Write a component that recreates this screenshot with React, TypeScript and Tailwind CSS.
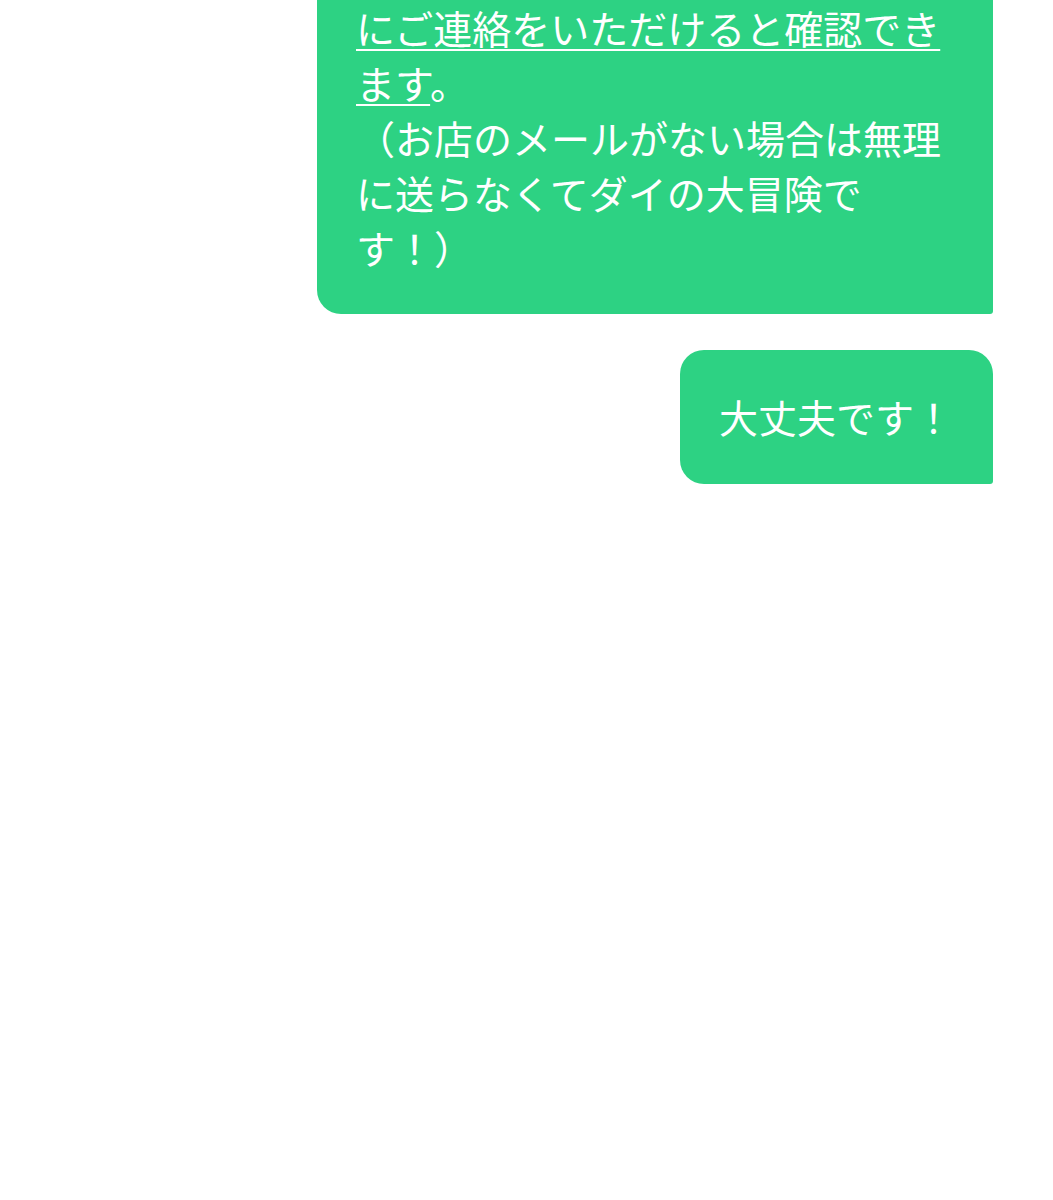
import React from 'react';

const font = { fontFamily: '"Noto Sans CJK JP", "Noto Sans", sans-serif' };

export default function App() {
  return (
    <div className="min-h-[1200px] w-full bg-white" style={font}>
      <div className="flex flex-col items-end gap-[36px] pr-[60px]">
        {/* message cut off at the top of the view */}
        <div className="w-[676px] rounded-bl-[24px] rounded-br-[3px] bg-[#2dd283] pl-[39px] pr-[41px] pb-[39px] text-[39px] leading-[55px] text-white">
          <a href="#" className="underline decoration-[2px] underline-offset-[5px]">
            にご連絡をいただけると確認できます
          </a>
          。
          <br />
          （お店のメールがない場合は無理に送らなくてダイの大冒険です！）
        </div>

        <div className="w-[313px] rounded-[24px] rounded-br-[3px] bg-[#2dd283] pl-[39px] pr-[40px] pt-[39px] pb-[40px] text-[39px] leading-[55px] text-white">
          大丈夫です！
        </div>
      </div>
    </div>
  );
}
